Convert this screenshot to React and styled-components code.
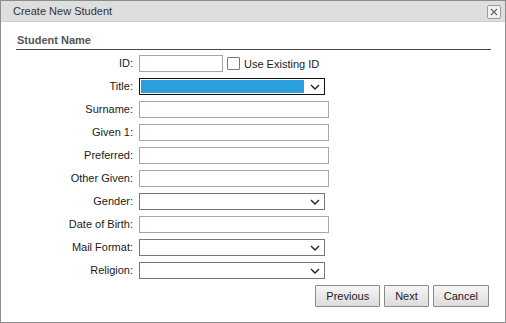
import { Fragment } from "react";
import styled, { createGlobalStyle } from "styled-components";

const GlobalStyle = createGlobalStyle`
  html, body {
    margin: 0;
    padding: 0;
    background: #ffffff;
  }
  body {
    font-family: "Liberation Sans", Arial, sans-serif;
    font-size: 11px;
    color: #222;
  }
`;

const Dialog = styled.div`
  box-sizing: border-box;
  width: 506px;
  height: 323px;
  border: 1px solid #8c8c8c;
  background: #fff;
  display: flex;
  flex-direction: column;
`;

const TitleBar = styled.div`
  height: 20px;
  flex: none;
  display: flex;
  align-items: center;
  justify-content: space-between;
  padding: 0 4px 0 12px;
  background: #dedede;
  border-bottom: 1px solid #cfcfcf;
  color: #333;
  font-size: 11px;
`;

const CloseButton = styled.div`
  box-sizing: border-box;
  width: 14px;
  height: 14px;
  margin-top: 1px;
  border: 1px solid #9a9a9a;
  border-radius: 2px;
  background: #f2f2f2;
  display: flex;
  align-items: center;
  justify-content: center;
`;

const Body = styled.div`
  padding: 12px 14px 0 15px;
  display: flex;
  flex-direction: column;
`;

const SectionTitle = styled.div`
  font-weight: bold;
  color: #555;
  font-size: 11px;
  line-height: 13px;
  padding: 0 0 2px 1px;
  border-bottom: 1px solid #444;
`;

const Form = styled.div`
  display: grid;
  grid-template-columns: 117px auto;
  column-gap: 6px;
  row-gap: 6px;
  margin-top: 5px;
  align-items: center;
`;

const Label = styled.label`
  text-align: right;
  color: #1a1a1a;
  line-height: 17px;
  white-space: nowrap;
`;

const FieldRow = styled.div`
  display: flex;
  align-items: center;
  gap: 4px;
  height: 17px;
`;

const TextInput = styled.div`
  box-sizing: border-box;
  width: ${(p) => p.$width || 190}px;
  height: 17px;
  border: 1px solid #a6a6a6;
  background: #fff;
`;

const SelectBox = styled.div`
  box-sizing: border-box;
  width: 186px;
  height: 17px;
  border: 1px solid ${(p) => (p.$focused ? "#111" : "#777")};
  background: #fff;
  display: flex;
  align-items: stretch;
  padding: 1px;
`;

const SelectValue = styled.div`
  flex: 1;
  background: ${(p) => (p.$highlight ? "#2a9fdb" : "transparent")};
  margin-right: 4px;
`;

const Chevron = styled.div`
  width: 14px;
  display: flex;
  align-items: center;
  justify-content: center;
  margin-right: 1px;
`;

const Checkbox = styled.div`
  box-sizing: border-box;
  width: 13px;
  height: 13px;
  border: 1px solid #7a7a7a;
  background: #fff;
  border-radius: 1px;
`;

const CheckLabel = styled.span`
  color: #1a1a1a;
`;

const Buttons = styled.div`
  display: flex;
  justify-content: flex-end;
  gap: 4px;
  margin-top: 6px;
  padding-right: 2px;
`;

const Button = styled.button`
  box-sizing: border-box;
  height: 22px;
  padding: 0 10px;
  border: 1px solid #8a8a8a;
  border-radius: 1px;
  background: linear-gradient(#f6f6f6, #dcdcdc);
  font-family: "Liberation Sans", Arial, sans-serif;
  font-size: 11px;
  color: #222;
`;

function SelectField({ focused, highlight }) {
  return (
    <SelectBox $focused={focused}>
      <SelectValue $highlight={highlight} />
      <Chevron>
        <svg width="10" height="6" viewBox="0 0 10 6">
          <path d="M1 1 L5 5 L9 1" fill="none" stroke="#222" strokeWidth="1.4" />
        </svg>
      </Chevron>
    </SelectBox>
  );
}

const fields = [
  { label: "Surname:", type: "text" },
  { label: "Given 1:", type: "text" },
  { label: "Preferred:", type: "text" },
  { label: "Other Given:", type: "text" },
  { label: "Gender:", type: "select" },
  { label: "Date of Birth:", type: "text" },
  { label: "Mail Format:", type: "select" },
  { label: "Religion:", type: "select" },
];

export default function App() {
  return (
    <>
      <GlobalStyle />
      <Dialog>
        <TitleBar>
          <span>Create New Student</span>
          <CloseButton>
            <svg width="8" height="8" viewBox="0 0 8 8">
              <path d="M1 1 L7 7 M7 1 L1 7" stroke="#666" strokeWidth="1.2" />
            </svg>
          </CloseButton>
        </TitleBar>
        <Body>
          <SectionTitle>Student Name</SectionTitle>
          <Form>
            <Label>ID:</Label>
            <FieldRow>
              <TextInput $width={84} />
              <Checkbox />
              <CheckLabel>Use Existing ID</CheckLabel>
            </FieldRow>

            <Label>Title:</Label>
            <FieldRow>
              <SelectField focused highlight />
            </FieldRow>

            {fields.map((f) => (
              <Fragment key={f.label}>
                <Label>{f.label}</Label>
                <FieldRow>
                  {f.type === "text" ? <TextInput /> : <SelectField />}
                </FieldRow>
              </Fragment>
            ))}
          </Form>
          <Buttons>
            <Button>Previous</Button>
            <Button>Next</Button>
            <Button>Cancel</Button>
          </Buttons>
        </Body>
      </Dialog>
    </>
  );
}
